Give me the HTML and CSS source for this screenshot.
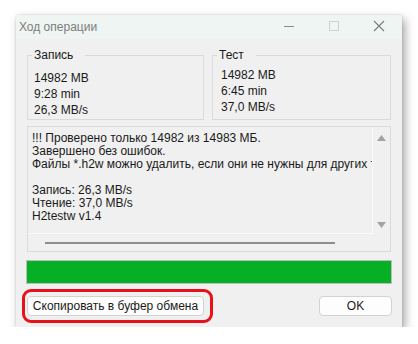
FILE: index.html
```html
<!DOCTYPE html>
<html lang="ru">
<head>
<meta charset="utf-8">
<link rel="stylesheet" href="styles.css">
</head>
<body>
<div class="window">
  <div class="titlebar">
    <span class="title">Ход операции</span>
    <div class="controls">
      <svg class="ctl" width="12" height="12" viewBox="0 0 12 12"><line x1="1" y1="6.5" x2="11" y2="6.5" stroke="#8a8a8a" stroke-width="1"/></svg>
      <svg class="ctl" width="12" height="12" viewBox="0 0 12 12"><rect x="1.5" y="1.5" width="9" height="9" fill="none" stroke="#d2d2d2" stroke-width="1"/></svg>
      <svg class="ctl" width="12" height="12" viewBox="0 0 12 12"><path d="M1 1 L11 11 M11 1 L1 11" stroke="#7a7a7a" stroke-width="1.1"/></svg>
    </div>
  </div>
  <div class="content">
    <div class="groups">
      <fieldset class="group write">
        <legend>Запись</legend>
        <div class="line">14982 MB</div>
        <div class="line">9:28 min</div>
        <div class="line">26,3 MB/s</div>
      </fieldset>
      <fieldset class="group test">
        <legend>Тест</legend>
        <div class="line">14982 MB</div>
        <div class="line">6:45 min</div>
        <div class="line">37,0 MB/s</div>
      </fieldset>
    </div>
    <div class="log">
      <div class="log-text">
        <div>!!! Проверено только 14982 из 14983 МБ.</div>
        <div>Завершено без ошибок.</div>
        <div>Файлы *.h2w можно удалить, если они не нужны для других тестов.</div>
        <div>&nbsp;</div>
        <div>Запись: 26,3 MB/s</div>
        <div>Чтение: 37,0 MB/s</div>
        <div>H2testw v1.4</div>
      </div>
      <div class="vscroll">
        <svg width="9" height="6" viewBox="0 0 9 6"><path d="M0 6 L4.5 0 L9 6 Z" fill="#a3a3a3"/></svg>
        <svg width="9" height="6" viewBox="0 0 9 6"><path d="M0 0 L4.5 6 L9 0 Z" fill="#a3a3a3"/></svg>
      </div>
      <div class="hscroll"><div class="thumb"></div></div>
    </div>
    <div class="progress"><div class="fill"></div></div>
    <div class="buttons">
      <div class="highlight">
        <button class="btn copy">Скопировать в буфер обмена</button>
      </div>
      <button class="btn ok">OK</button>
    </div>
  </div>
</div>
</body>
</html>
```
FILE: styles.css
```css
html, body {
  margin: 0;
  padding: 0;
  background: #ffffff;
}
body {
  font-family: "Liberation Sans", "DejaVu Sans", sans-serif;
  font-size: 12px;
  color: #1a1a1a;
}
.window {
  margin: 15px 0 0 16px;
  width: 386px;
  height: 312px;
  background: #f0f0f0;
  box-shadow: 3px 4px 9px rgba(0, 0, 0, 0.35), 0 0 2px rgba(0, 0, 0, 0.15);
  display: flex;
  flex-direction: column;
}
.titlebar {
  height: 24px;
  background: #eef5f3;
  display: flex;
  align-items: center;
  justify-content: space-between;
}
.title {
  padding-left: 3px;
  color: #7d7d7d;
  font-size: 12px;
  line-height: 16px;
  margin-top: -1px;
}
.controls {
  display: flex;
  gap: 33px;
  padding-right: 17px;
  margin-top: -2px;
}
.ctl {
  display: block;
}
.content {
  padding: 0 11px;
  display: flex;
  flex-direction: column;
}
.groups {
  display: grid;
  grid-template-columns: 177px 179px;
  gap: 8px;
  margin-top: 8px;
}
.group {
  margin: 0;
  border: 1px solid #dadada;
  padding: 0 0 0 6px;
  height: 73px;
  box-sizing: border-box;
  min-width: 0;
}
.group legend {
  padding: 0 12px 0 2px;
  margin-left: -2px;
  line-height: 16px;
}
.group .line {
  line-height: 16px;
}
.group.write {
  padding-top: 7px;
}
.group.test {
  padding-top: 4px;
  padding-left: 8px;
}
.group.test legend {
  margin-left: -4px;
}
.log {
  margin-top: 6px;
  height: 126px;
  box-sizing: border-box;
  border: 1px solid #dadada;
  display: grid;
  grid-template-columns: 345px 1fr;
  grid-template-rows: 107px 1fr;
  background: #f0f0f0;
}
.log-text {
  border-right: 1px solid #fafafa;
  border-bottom: 1px solid #fafafa;
  padding: 5px 0 0 4px;
  line-height: 13px;
  overflow: hidden;
  white-space: nowrap;
}
.vscroll {
  display: flex;
  flex-direction: column;
  justify-content: space-between;
  align-items: center;
  padding: 8px 0 6px;
}
.vscroll svg {
  display: block;
}
.hscroll {
  grid-column: 1 / 3;
  display: flex;
  align-items: center;
}
.thumb {
  margin-left: 17px;
  width: 290px;
  height: 2px;
  background: #8d8d8d;
}
.progress {
  margin: 8px -1px 0;
  height: 24px;
  box-sizing: border-box;
  border: 1px solid #bcbcbc;
  background: #e6e6e6;
}
.fill {
  height: 100%;
  background: #06b025;
}
.buttons {
  margin-top: 12px;
  display: flex;
  justify-content: space-between;
  align-items: center;
}
.highlight {
  position: relative;
  display: flex;
}
.highlight::after {
  content: "";
  position: absolute;
  top: -7px;
  bottom: -7px;
  left: -5px;
  right: -9px;
  border: 3px solid #e8111b;
  border-radius: 9px;
  pointer-events: none;
}
.btn {
  font-family: inherit;
  font-size: 12px;
  color: #1a1a1a;
  height: 20px;
  padding: 0;
  background: #fdfdfd;
  border: 1px solid #d2d2d2;
  border-radius: 4px;
  line-height: 16px;
}
.btn.copy {
  width: 177px;
}
.btn.ok {
  width: 73px;
  margin-right: -1px;
}
```
